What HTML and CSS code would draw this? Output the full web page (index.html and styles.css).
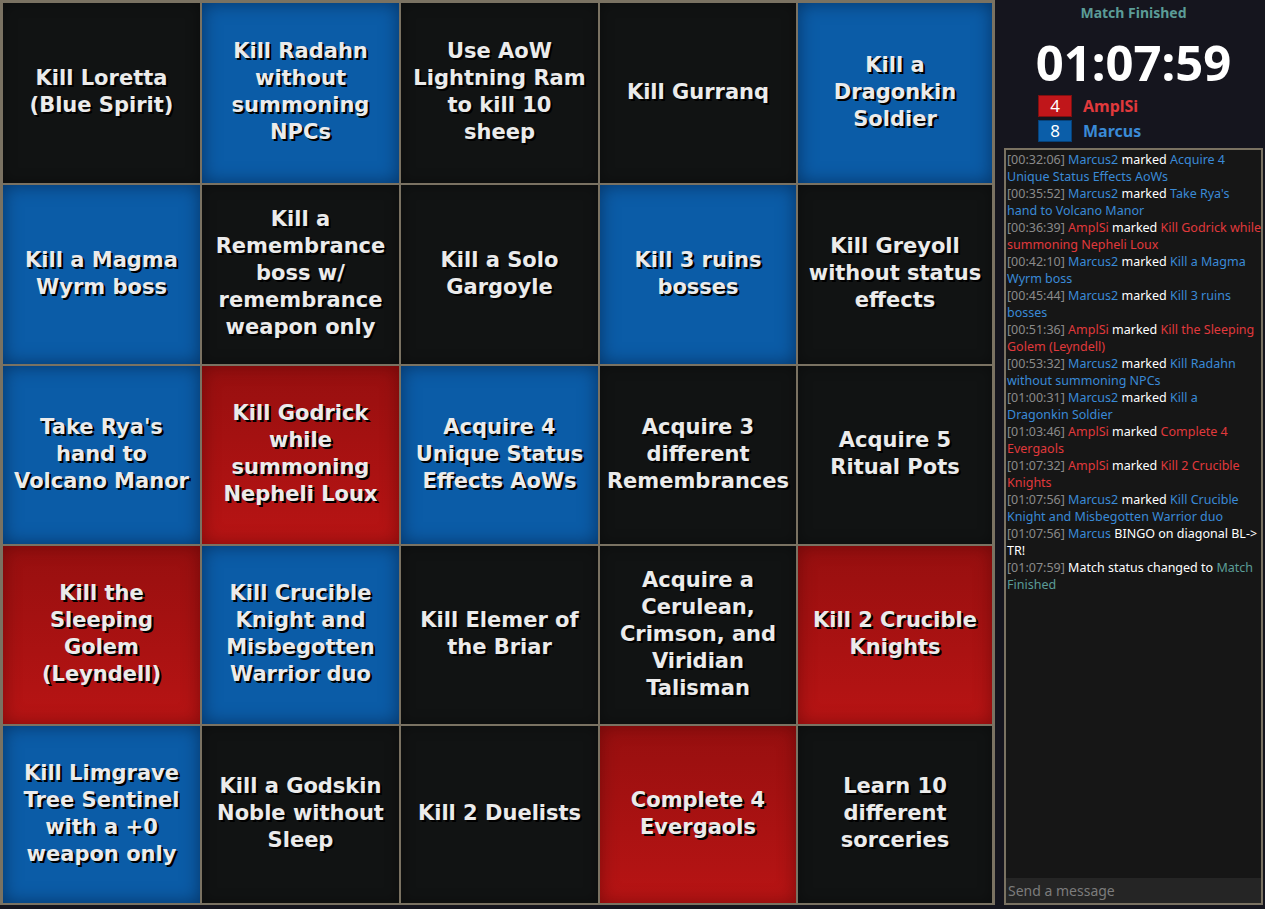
FILE: index.html
```html
<!DOCTYPE html>
<html>
<head>
<meta charset="utf-8">
<link rel="stylesheet" href="styles.css">
</head>
<body>
<div class="page">
  <div class="board">
    <div class="cell black"><span>Kill Loretta<br>(Blue Spirit)</span></div>
    <div class="cell blue"><span>Kill Radahn<br>without<br>summoning<br>NPCs</span></div>
    <div class="cell black"><span>Use AoW<br>Lightning Ram<br>to kill 10<br>sheep</span></div>
    <div class="cell black"><span>Kill Gurranq</span></div>
    <div class="cell blue"><span>Kill a<br>Dragonkin<br>Soldier</span></div>

    <div class="cell blue"><span>Kill a Magma<br>Wyrm boss</span></div>
    <div class="cell black"><span>Kill a<br>Remembrance<br>boss w/<br>remembrance<br>weapon only</span></div>
    <div class="cell black"><span>Kill a Solo<br>Gargoyle</span></div>
    <div class="cell blue"><span>Kill 3 ruins<br>bosses</span></div>
    <div class="cell black"><span>Kill Greyoll<br>without status<br>effects</span></div>

    <div class="cell blue"><span>Take Rya's<br>hand to<br>Volcano Manor</span></div>
    <div class="cell red"><span>Kill Godrick<br>while<br>summoning<br>Nepheli Loux</span></div>
    <div class="cell blue"><span>Acquire 4<br>Unique Status<br>Effects AoWs</span></div>
    <div class="cell black"><span>Acquire 3<br>different<br>Remembrances</span></div>
    <div class="cell black"><span>Acquire 5<br>Ritual Pots</span></div>

    <div class="cell red"><span>Kill the<br>Sleeping<br>Golem<br>(Leyndell)</span></div>
    <div class="cell blue"><span>Kill Crucible<br>Knight and<br>Misbegotten<br>Warrior duo</span></div>
    <div class="cell black"><span>Kill Elemer of<br>the Briar</span></div>
    <div class="cell black"><span>Acquire a<br>Cerulean,<br>Crimson, and<br>Viridian<br>Talisman</span></div>
    <div class="cell red"><span>Kill 2 Crucible<br>Knights</span></div>

    <div class="cell blue"><span>Kill Limgrave<br>Tree Sentinel<br>with a +0<br>weapon only</span></div>
    <div class="cell black"><span>Kill a Godskin<br>Noble without<br>Sleep</span></div>
    <div class="cell black"><span>Kill 2 Duelists</span></div>
    <div class="cell red"><span>Complete 4<br>Evergaols</span></div>
    <div class="cell black"><span>Learn 10<br>different<br>sorceries</span></div>
  </div>

  <div class="sidebar">
    <div class="status">Match Finished</div>
    <div class="timer">01:07:59</div>
    <div class="scores">
      <div class="score"><span class="box box-red">4</span><span class="name c-red">AmplSi</span></div>
      <div class="score"><span class="box box-blue">8</span><span class="name c-blue">Marcus</span></div>
    </div>
    <div class="chat">
      <div class="log">
        <div class="msg"><span class="ts">[00:32:06]</span> <span class="c-blue">Marcus2</span> marked <span class="c-blue">Acquire 4<br>Unique Status Effects AoWs</span></div>
        <div class="msg"><span class="ts">[00:35:52]</span> <span class="c-blue">Marcus2</span> marked <span class="c-blue">Take Rya's<br>hand to Volcano Manor</span></div>
        <div class="msg"><span class="ts">[00:36:39]</span> <span class="c-red">AmplSi</span> marked <span class="c-red">Kill Godrick while<br>summoning Nepheli Loux</span></div>
        <div class="msg"><span class="ts">[00:42:10]</span> <span class="c-blue">Marcus2</span> marked <span class="c-blue">Kill a Magma<br>Wyrm boss</span></div>
        <div class="msg"><span class="ts">[00:45:44]</span> <span class="c-blue">Marcus2</span> marked <span class="c-blue">Kill 3 ruins<br>bosses</span></div>
        <div class="msg"><span class="ts">[00:51:36]</span> <span class="c-red">AmplSi</span> marked <span class="c-red">Kill the Sleeping<br>Golem (Leyndell)</span></div>
        <div class="msg"><span class="ts">[00:53:32]</span> <span class="c-blue">Marcus2</span> marked <span class="c-blue">Kill Radahn<br>without summoning NPCs</span></div>
        <div class="msg"><span class="ts">[01:00:31]</span> <span class="c-blue">Marcus2</span> marked <span class="c-blue">Kill a<br>Dragonkin Soldier</span></div>
        <div class="msg"><span class="ts">[01:03:46]</span> <span class="c-red">AmplSi</span> marked <span class="c-red">Complete 4<br>Evergaols</span></div>
        <div class="msg"><span class="ts">[01:07:32]</span> <span class="c-red">AmplSi</span> marked <span class="c-red">Kill 2 Crucible<br>Knights</span></div>
        <div class="msg"><span class="ts">[01:07:56]</span> <span class="c-blue">Marcus2</span> marked <span class="c-blue">Kill Crucible<br>Knight and Misbegotten Warrior duo</span></div>
        <div class="msg"><span class="ts">[01:07:56]</span> <span class="c-blue">Marcus</span> BINGO on diagonal BL-&gt;<br>TR!</div>
        <div class="msg"><span class="ts">[01:07:59]</span> Match status changed to <span class="c-teal">Match<br>Finished</span></div>
      </div>
      <div class="input">Send a message</div>
    </div>
  </div>
</div>
</body>
</html>
```

FILE: styles.css
```css
html, body {
  margin: 0;
  padding: 0;
  background: #15151e;
}
.page {
  display: flex;
  width: 1265px;
  height: 909px;
}
.board {
  flex: none;
  width: 995px;
  height: 905px;
  box-sizing: border-box;
  background: #7a7262;
  padding: 3px 3px 2px 3px;
  display: grid;
  grid-template-columns: 197px 197px 197px 196px 1fr;
  grid-template-rows: 180px 179px 178px 178px 1fr;
  gap: 2px;
}
.cell {
  display: flex;
  align-items: center;
  justify-content: center;
  text-align: center;
  padding: 0 2px 2px 2px;
  white-space: nowrap;
  overflow: hidden;
  font-family: "DejaVu Sans", Verdana, sans-serif;
  font-weight: bold;
  font-size: 21px;
  line-height: 27px;
  color: #ebebeb;
  text-shadow: 2px 2px 0 #000;
}
.black {
  background: #111313;
  box-shadow: inset 0 0 14px rgba(0,0,0,0.35);
}
.blue {
  background: #0b5ca7;
  box-shadow: inset 0 0 18px rgba(0,20,50,0.55);
}
.red {
  background: linear-gradient(#970f0f, #b81414);
  box-shadow: inset 0 0 18px rgba(60,0,0,0.45);
}
.sidebar {
  flex: 1;
  display: flex;
  flex-direction: column;
  padding: 0 2px 4px 9px;
  font-family: "Noto Sans", "Open Sans", sans-serif;
}
.status {
  text-align: center;
  color: #5b9c97;
  font-weight: bold;
  font-size: 14px;
  line-height: 20px;
  margin-top: 3px;
}
.timer {
  text-align: center;
  color: #ffffff;
  font-weight: bold;
  font-size: 49px;
  line-height: 56px;
  margin-top: 11px;
}
.scores {
  display: flex;
  flex-direction: column;
  gap: 3px;
  padding-left: 34px;
  margin-top: 5px;
}
.score {
  display: flex;
  align-items: center;
  gap: 11px;
}
.box {
  width: 34px;
  height: 22px;
  box-sizing: border-box;
  display: flex;
  align-items: center;
  justify-content: center;
  color: #fff;
  font-size: 17px;
  line-height: 20px;
}
.box-red { background: #c0161a; border: 1px solid #7f1010; }
.box-blue { background: #0b5ea9; border: 1px solid #07427a; }
.name {
  font-weight: bold;
  font-size: 16px;
  line-height: 22px;
}
.chat {
  flex: 1;
  margin-top: 6px;
  border: 2px solid #7a7262;
  background: #161616;
  display: flex;
  flex-direction: column;
  overflow: hidden;
}
.log {
  flex: 1;
  padding: 1px 0 0 1px;
  font-size: 12.5px;
  line-height: 17px;
  color: #ffffff;
  white-space: nowrap;
  overflow: hidden;
}
.ts { color: #8a8a8a; }
.c-blue { color: #3a8ad6; }
.c-red { color: #e0393c; }
.c-teal { color: #5b9c97; }
.input {
  height: 25px;
  background: #252525;
  color: #7c7c7c;
  font-size: 14px;
  line-height: 25px;
  padding-left: 2px;
}
```
